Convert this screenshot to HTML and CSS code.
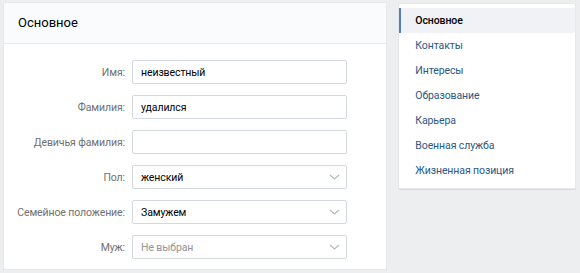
FILE: index.html
```html
<!DOCTYPE html>
<html lang="ru">
<head>
  <meta charset="UTF-8" />
  <title>Редактирование страницы</title>
  <link rel="stylesheet" href="styles.css">
</head>
<body>
  <div class="page">
    <div class="card editor">
      <div class="card-header">Основное</div>
      <form class="form">
        <div class="row">
          <label class="label" for="fname">Имя:</label>
          <input class="field" id="fname" type="text" value="неизвестный" />
        </div>
        <div class="row">
          <label class="label" for="lname">Фамилия:</label>
          <input class="field" id="lname" type="text" value="удалился" />
        </div>
        <div class="row">
          <label class="label" for="maiden">Девичья фамилия:</label>
          <input class="field" id="maiden" type="text" value="" />
        </div>
        <div class="row">
          <span class="label">Пол:</span>
          <div class="field select">
            <span>женский</span>
            <svg class="chevron" width="11" height="6" viewBox="0 0 11 6"><path d="M1 1l4.5 4L10 1" fill="none" stroke="#b4b9c0" stroke-width="1.2"/></svg>
          </div>
        </div>
        <div class="row">
          <span class="label">Семейное положение:</span>
          <div class="field select">
            <span>Замужем</span>
            <svg class="chevron" width="11" height="6" viewBox="0 0 11 6"><path d="M1 1l4.5 4L10 1" fill="none" stroke="#b4b9c0" stroke-width="1.2"/></svg>
          </div>
        </div>
        <div class="row">
          <span class="label">Муж:</span>
          <div class="field select">
            <span class="placeholder">Не выбран</span>
            <svg class="chevron" width="11" height="6" viewBox="0 0 11 6"><path d="M1 1l4.5 4L10 1" fill="none" stroke="#b4b9c0" stroke-width="1.2"/></svg>
          </div>
        </div>
      </form>
    </div>

    <div class="card menu">
      <a class="menu-item active" href="#">Основное</a>
      <a class="menu-item" href="#">Контакты</a>
      <a class="menu-item" href="#">Интересы</a>
      <a class="menu-item" href="#">Образование</a>
      <a class="menu-item" href="#">Карьера</a>
      <a class="menu-item" href="#">Военная служба</a>
      <a class="menu-item" href="#">Жизненная позиция</a>
    </div>
  </div>
</body>
</html>
```

FILE: styles.css
```css
:root {
  --bg: #edeef0;
  --card: #ffffff;
  --border: #e7e8ec;
  --link: #2a5885;
  --label: #6f6f6f;
}

body {
  margin: 0;
  background: var(--bg);
  font-family: Roboto, "Open Sans", sans-serif;
  font-size: 10.5px;
  letter-spacing: -0.1px;
  color: #000;
}

.page {
  display: flex;
  align-items: flex-start;
  gap: 11px;
  padding: 2px 4px 0 3px;
}

.card {
  background: var(--card);
  border: 1px solid var(--border);
  border-radius: 2px;
  box-shadow: 0 1px 0 0 #d7d8db;
  box-sizing: border-box;
}

.editor {
  width: 385px;
  height: 268px;
}

.card-header {
  height: 41px;
  box-sizing: border-box;
  padding: 12px 0 0 14px;
  font-size: 13px;
  letter-spacing: 0;
  background: #fafbfc;
  border-bottom: 1px solid var(--border);
}

.form {
  padding-top: 16px;
}

.row {
  display: flex;
  align-items: center;
  gap: 7px;
  margin-bottom: 11px;
}

.label {
  width: 121px;
  text-align: right;
  white-space: nowrap;
  color: var(--label);
}

.field {
  width: 215px;
  height: 24px;
  box-sizing: border-box;
  border: 1px solid #d3d9de;
  border-radius: 2px;
  padding: 0 8px;
  font: inherit;
  letter-spacing: inherit;
  color: #000;
  background: #fff;
}

.select {
  display: flex;
  align-items: center;
  justify-content: space-between;
  padding-right: 6px;
}

.placeholder {
  color: #939393;
}

.menu {
  width: 178px;
  margin-top: 1px;
  padding: 4px 0 5px;
}

.menu-item {
  display: block;
  height: 25px;
  line-height: 25px;
  padding-left: 14px;
  color: var(--link);
  text-decoration: none;
  border-left: 2px solid transparent;
}

.menu-item.active {
  background: #f0f2f5;
  border-left-color: #5181b8;
  color: #000;
  font-weight: 500;
}
```
